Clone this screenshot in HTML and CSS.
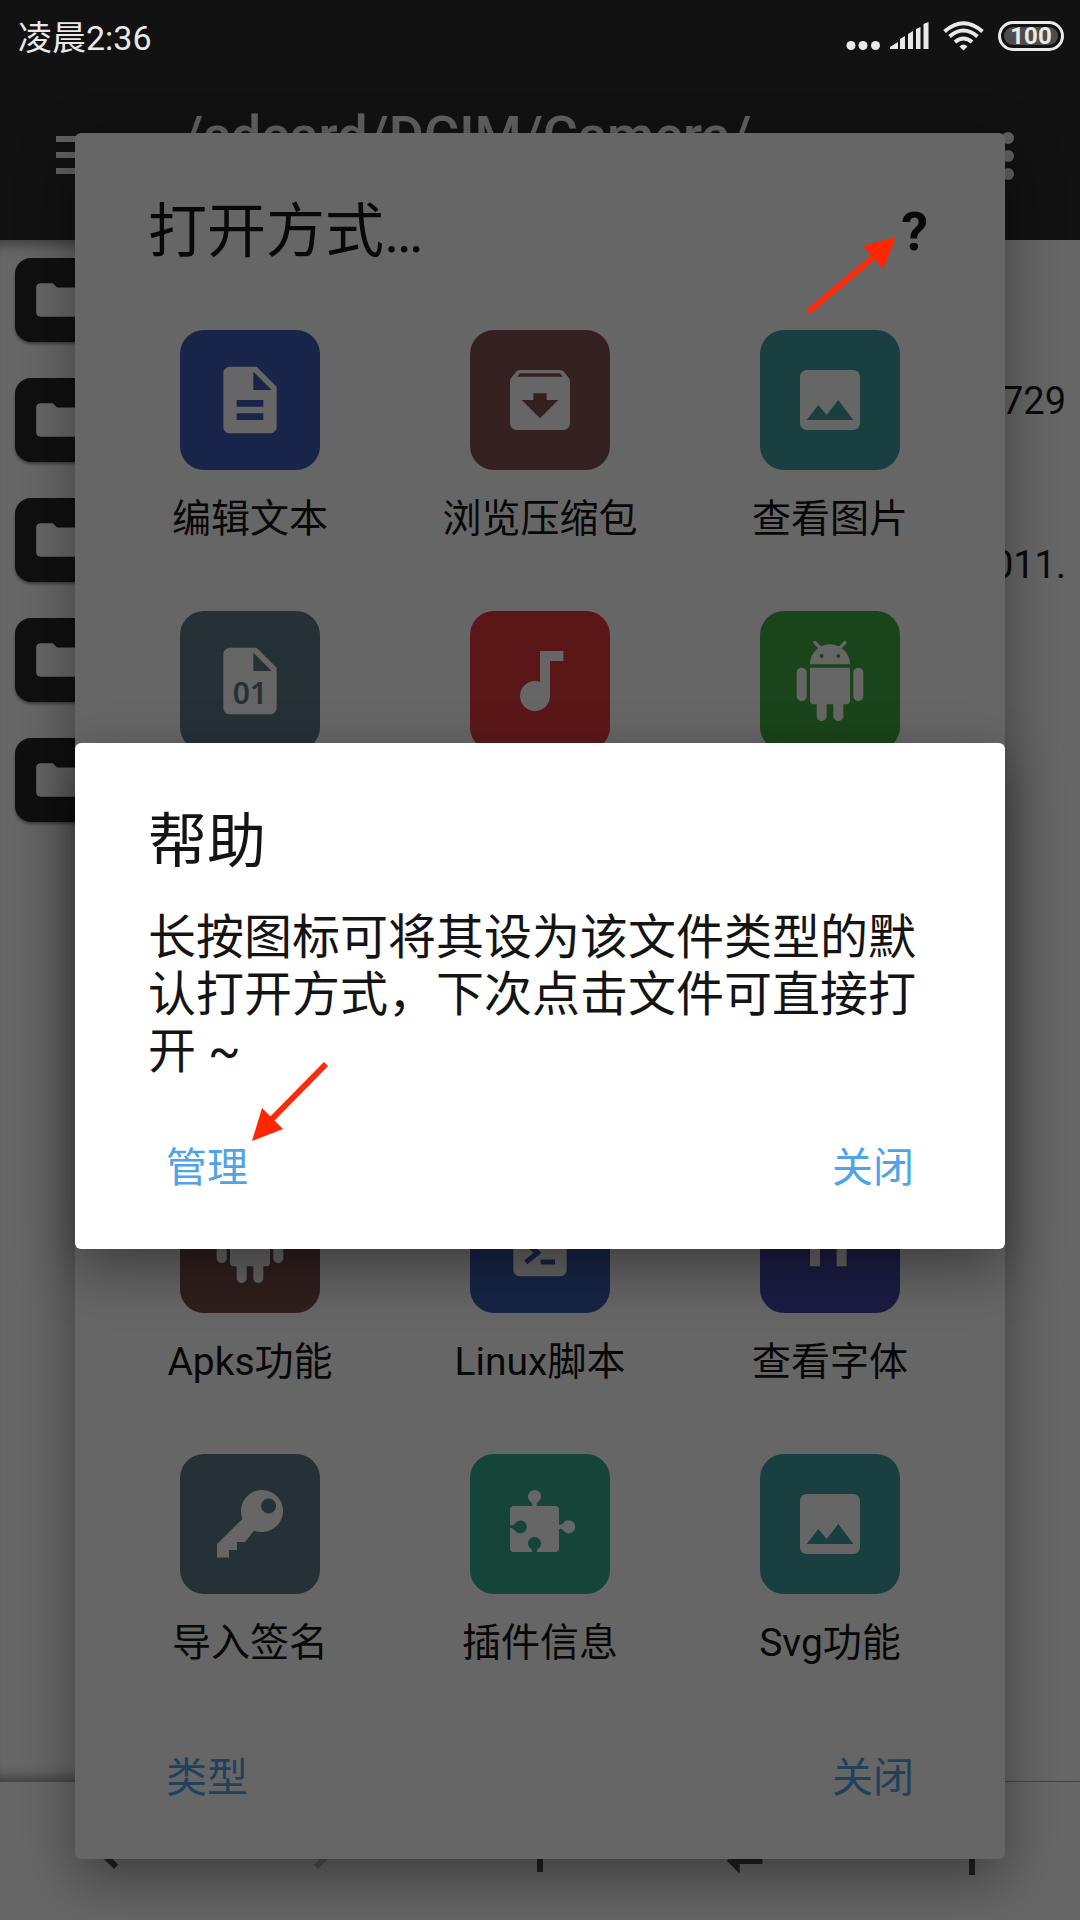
FILE: index.html
```html
<!DOCTYPE html>
<html lang="zh-CN">
<head>
<meta charset="utf-8">
<meta name="viewport" content="width=device-width, initial-scale=1">
<title>打开方式</title>
<link rel="stylesheet" href="styles.css">
</head>
<body>
<svg class="defs" aria-hidden="true">
  <symbol id="folder" viewBox="0 0 24 24"><path d="M10 4H4c-1.100 0-2 .9-2 2v12c0 1.100.9 2 2 2h16c1.100 0 2-.9 2-2V8c0-1.100-.9-2-2-2h-8l-2-2z"/></symbol>
  <symbol id="android" viewBox="0 0 24 24"><path d="M6 18c0 .55.45 1 1 1h1v3.500c0 .83.67 1.500 1.500 1.500s1.500-.67 1.500-1.500V19h2v3.500c0 .83.67 1.500 1.500 1.500s1.500-.67 1.500-1.500V19h1c.55 0 1-.45 1-1V8H6v10zM3.500 8C2.670 8 2 8.670 2 9.500v7c0 .83.67 1.500 1.500 1.500S5 17.330 5 16.500v-7C5 8.670 4.330 8 3.500 8zm17 0c-.83 0-1.500.67-1.500 1.500v7c0 .83.67 1.500 1.500 1.500s1.500-.67 1.500-1.500v-7c0-.83-.67-1.500-1.500-1.500zm-4.970-5.840l1.300-1.300c.2-.2.2-.51 0-.71-.2-.2-.51-.2-.71 0l-1.480 1.480C13.850 1.230 12.950 1 12 1c-.96 0-1.860.23-2.660.63L7.850.15c-.2-.2-.51-.2-.71 0-.2.2-.2.51 0 .71l1.310 1.310C6.970 3.260 6 5.010 6 7h12c0-1.990-.97-3.750-2.470-4.840zM10 5H9V4h1v1zm5 0h-1V4h1v1z"/></symbol>
  <symbol id="image" viewBox="0 0 24 24"><path fill-rule="evenodd" d="M5 3h14a2 2 0 0 1 2 2v14a2 2 0 0 1-2 2H5a2 2 0 0 1-2-2V5a2 2 0 0 1 2-2zM5 18h14l-4.500-6-3.500 4.510-2.500-3.010z"/></symbol>
</svg>
<div class="screen">
  <div class="status">
    <span class="clock">凌晨2:36</span>
    <div class="status-icons">
      <svg width="34" height="30" viewBox="0 0 34 30"><circle cx="5" cy="24.500" r="4.500"/><circle cx="17" cy="24.500" r="4.500"/><circle cx="29.500" cy="24.500" r="4.500"/></svg>
      <svg class="signal" width="39" height="30" viewBox="0 0 39 30"><path d="M0 28v-2l8-5v7zM10 28V18l5-3v13zM18 28V13l5-3v18zM26 28V8l4.500-2v22zM33.500 28V3l5-2v27z"/></svg>
      <svg class="wifi" width="41" height="30" viewBox="0 0 41 30"><g fill="none" stroke="#e9e9e9" stroke-width="4"><path d="M1.500 10.500Q20.500-6 39.500 10.500M6.500 15.500Q20.500 3.500 34.500 15.500M12 21Q20.500 14 29 21"/></g><path d="M20.500 29.500l-4-4q4-4 8 0z"/></svg>
      <span class="battery"><span class="charge">100</span></span>
    </div>
  </div>
  <header class="appbar">
    <button class="plain menu" aria-label="菜单"><svg width="54" height="38" viewBox="0 0 54 38"><path d="M0 0h54v6H0zM0 16h54v6H0zM0 32h54v6H0z"/></svg></button>
    <h1 class="path">/sdcard/DCIM/Camera/</h1>
    <button class="plain more" aria-label="更多"><svg width="12" height="48" viewBox="0 0 12 48"><circle cx="6" cy="6" r="6"/><circle cx="6" cy="24" r="6"/><circle cx="6" cy="42" r="6"/></svg></button>
  </header>
  <main class="panes">
    <div class="pane left">
      <span class="folder"><svg><use href="#folder"/></svg></span>
      <span class="folder"><svg><use href="#folder"/></svg></span>
      <span class="folder"><svg><use href="#folder"/></svg></span>
      <span class="folder"><svg><use href="#folder"/></svg></span>
      <span class="folder"><svg><use href="#folder"/></svg></span>
    </div>
    <div class="pane right">
      <span>729</span>
      <span>011.</span>
    </div>
  </main>
  <nav class="toolbar">
    <button class="plain" aria-label="后退"><svg viewBox="0 0 24 24"><path d="M15.410 7.410L14 6l-6 6 6 6 1.410-1.410L10.830 12z"/></svg></button>
    <button class="plain" aria-label="前进" disabled><svg viewBox="0 0 24 24"><path d="M10 6L8.590 7.410 13.170 12l-4.580 4.590L10 18l6-6z"/></svg></button>
    <button class="plain" aria-label="新建"><svg viewBox="0 0 24 24"><path d="M19 13h-6v6h-2v-6H5v-2h6V5h2v6h6v2z"/></svg></button>
    <button class="plain" aria-label="切换"><svg class="swap" viewBox="0 0 24 24"><path d="M6.990 11L3 15l3.990 4v-3H14v-2H6.990v-3zM21 9l-3.990-4v3H10v2h7.010v3L21 9z"/></svg></button>
    <button class="plain" aria-label="上级"><svg viewBox="0 0 24 24"><path d="M4 12l1.410 1.410L11 7.830V20h2V7.830l5.580 5.590L20 12l-8-8-8 8z"/></svg></button>
  </nav>

  <div class="layer">
    <section class="dialog">
      <div class="dialog-head">
        <h2>打开方式…</h2>
        <button class="plain help">?</button>
      </div>
      <div class="apps">
        <button class="plain app"><span class="tile navy"><svg viewBox="0 0 24 24"><path d="M14 2H6c-1.100 0-2 .9-2 2v16c0 1.100.9 2 2 2h12c1.100 0 2-.9 2-2V8l-6-6zm2 16H8v-2h8v2zm0-4H8v-2h8v2zm-3-5V3.500L18.500 9H13z"/></svg></span><span class="label">编辑文本</span></button>
        <button class="plain app"><span class="tile brown"><svg viewBox="0 0 24 24"><path d="M20.540 5.230l-1.390-1.680C18.880 3.210 18.470 3 18 3H6c-.47 0-.88.21-1.160.55L3.460 5.230C3.170 5.570 3 6.020 3 6.500V19c0 1.100.9 2 2 2h14c1.100 0 2-.9 2-2V6.500c0-.48-.17-.93-.46-1.270zM12 17.500L6.500 12H10v-2h4v2h3.500L12 17.500zM5.120 5l.81-1h12l.94 1H5.120z"/></svg></span><span class="label">浏览压缩包</span></button>
        <button class="plain app"><span class="tile teal"><svg><use href="#image"/></svg></span><span class="label">查看图片</span></button>
        <button class="plain app"><span class="tile slate"><svg viewBox="0 0 24 24"><path d="M14 2H6c-1.100 0-2 .9-2 2v16c0 1.100.9 2 2 2h12c1.100 0 2-.9 2-2V8l-6-6zm-1 7V3.500L18.500 9H13z"/><text class="bits" x="12" y="19" text-anchor="middle">01</text></svg></span></button>
        <button class="plain app" aria-label="音乐"><span class="tile red"><svg viewBox="0 0 24 24"><path d="M12 3v9.280c-.47-.17-.97-.28-1.500-.28C8.010 12 6 14.010 6 16.500S8.010 21 10.500 21c2.310 0 4.200-1.750 4.450-4H15V6h4V3h-7z"/></svg></span></button>
        <button class="plain app" aria-label="安装包"><span class="tile green"><svg><use href="#android"/></svg></span></button>
        <button class="plain app fourth"><span class="tile coffee"><svg><use href="#android"/></svg></span><span class="label">Apks功能</span></button>
        <button class="plain app fourth"><span class="tile blue"><svg viewBox="0 0 24 24"><path d="M14 2H6c-1.100 0-2 .9-2 2v16c0 1.100.9 2 2 2h12c1.100 0 2-.9 2-2V8z"/><path class="prompt" d="M7.700 12l3.600 2.900-3.600 2.900M12.200 17.700h4.300"/></svg></span><span class="label">Linux脚本</span></button>
        <button class="plain app fourth"><span class="tile indigo"><svg viewBox="0 0 24 24"><path d="M6 5h3v14H6zM14 5h3v14h-3z"/></svg></span><span class="label">查看字体</span></button>
        <button class="plain app fifth"><span class="tile slate"><svg viewBox="0 0 80 80"><path fill-rule="evenodd" d="M52 6a21 21 0 1 1-8 40.400L35 58H27V66H19V73.500H7V60L32.500 35A21 21 0 0 1 52 6zM58.500 14.500a7.500 7.500 0 1 0 .1 0z"/></svg></span><span class="label">导入签名</span></button>
        <button class="plain app fifth"><span class="tile jade"><svg viewBox="0 0 80 80"><path d="M14 22H32Q33 20 31 18A6.500 6.500 0 1 1 38 18Q36 20 37 22H55Q59 22 59 26V40.500Q61 41.500 63 39.500A6.500 6.500 0 1 1 63 46Q61 44 59 45V64Q59 68 55 68H37Q36.500 66 38 65A6.500 6.500 0 1 0 31 65Q32.500 66 32 68H14Q10 68 10 64V44Q12 43.500 14.500 46A6.500 6.500 0 1 0 14.500 40Q12 42 10 41V26Q10 22 14 22z"/></svg></span><span class="label">插件信息</span></button>
        <button class="plain app fifth"><span class="tile teal"><svg><use href="#image"/></svg></span><span class="label">Svg功能</span></button>
      </div>
      <div class="actions"><button class="plain">类型</button><button class="plain">关闭</button></div>
    </section>
  </div>

  <div class="layer scrim">
    <section class="dialog" role="dialog" aria-labelledby="help-title">
      <div class="dialog-head"><h2 id="help-title">帮助</h2></div>
      <p class="message">长按图标可将其设为该文件类型的默认打开方式，下次点击文件可直接打开 ~</p>
      <div class="actions"><button class="plain">管理</button><button class="plain">关闭</button></div>
      <svg class="arrow to-manage" width="80" height="84" viewBox="0 0 80 84"><path d="M75 4L18 62" stroke="#fb2c0c" stroke-width="6"/><path d="M1 81L11 48 32 69z"/></svg>
    </section>
    <svg class="arrow to-help" width="94" height="82" viewBox="0 0 94 82"><path d="M4 78L72 21" stroke="#fb2c0c" stroke-width="6"/><path d="M92 3L59 12 79 35z"/></svg>
  </div>
</div>
</body>
</html>
```
FILE: styles.css
```css
* { box-sizing: border-box; }

body {
  margin: 0;
  font-family: Roboto, "Noto Sans CJK SC", sans-serif;
}

.defs { display: none; }

.plain {
  padding: 0;
  border: 0;
  background: none;
  color: inherit;
  font: inherit;
}

.screen {
  position: relative;
  display: flex;
  flex-direction: column;
  min-height: 100vh;
  overflow: hidden;
  background: #fff;
}

/* Status bar stays bright above the dimmed page */
.status {
  display: flex;
  align-items: center;
  justify-content: space-between;
  height: 72px;
  padding: 0 16px 0 18px;
  background: #121212;
  color: #e9e9e9;
  position: relative;
  z-index: 3;
}

.clock {
  padding-top: 4px;
  font-size: 34px;
  line-height: 40px;
}

.status-icons {
  display: flex;
  align-items: center;
  gap: 14px;
  fill: #e9e9e9;
}

.signal { margin-left: -4px; }

.battery {
  width: 66px;
  height: 30px;
  padding: 3px;
  border: 3px solid #e9e9e9;
  border-radius: 15px;
}

.charge {
  display: block;
  border-radius: 9px;
  background: #4c4c4c;
  font-size: 24px;
  font-weight: 700;
  line-height: 18px;
  text-align: center;
}

.appbar {
  display: flex;
  align-items: flex-start;
  height: 168px;
  padding: 34px 66px 0 56px;
  background: #2d2d2d;
  color: #f0f0f0;
  fill: #f0f0f0;
}

.menu { margin-top: 30px; }
.menu svg, .more svg { display: block; }
.more { margin-top: 26px; }

.path {
  flex: 1;
  margin: 0 0 0 72px;
  font-size: 54px;
  font-weight: 500;
  line-height: 60px;
}

.panes {
  display: grid;
  grid-template-columns: 1fr 1fr;
  flex: 1;
}

.pane {
  display: flex;
  flex-direction: column;
}

.left {
  gap: 36px;
  padding: 18px 15px;
  box-shadow: inset 0 16px 14px -12px #00000070, inset 0 -16px 14px -12px #00000070;
}

.folder {
  display: grid;
  place-items: center;
  width: 84px;
  height: 84px;
  border-radius: 16px;
  background: #282828;
  box-shadow: 0 2px 3px #00000066;
}

.folder svg {
  width: 50px;
  height: 50px;
  fill: #fff;
}

.right {
  align-items: flex-end;
  gap: 120px;
  padding: 139px 14px 0;
  border-bottom: 1px solid #aaa;
  color: #1c1c1c;
  font-size: 38px;
  line-height: 44px;
}

.toolbar {
  display: grid;
  grid-template-columns: repeat(5, 1fr);
  height: 138px;
  fill: #505050;
}

.toolbar button {
  display: grid;
  place-items: center;
}

.toolbar button:disabled { fill: #c4c4c4; }
.toolbar svg { width: 72px; height: 72px; }
.toolbar .swap { width: 78px; height: 78px; }

.layer {
  position: absolute;
  inset: 0;
  display: flex;
  flex-direction: column;
  justify-content: center;
  padding: 72px 75px 0;
}

.scrim { background: #00000099; }

.dialog {
  position: relative;
  padding: 62px 30px 51px;
  border-radius: 6px;
  background: #fff;
  box-shadow: 0 20px 56px #00000066;
  color: #141414;
}

.dialog-head {
  display: flex;
  align-items: center;
  justify-content: space-between;
  padding: 0 47px 0 43px;
}

h2 {
  margin: 0;
  font-size: 59px;
  font-weight: 400;
  line-height: 74px;
}

.help {
  font-size: 54px;
  font-weight: 700;
  line-height: 60px;
}

.apps {
  display: grid;
  grid-template-columns: repeat(3, 1fr);
  grid-template-rows: repeat(5, 281px);
  margin-top: 61px;
}

.app {
  display: flex;
  flex-direction: column;
  align-items: center;
  gap: 24px;
}

.fourth { grid-row: 4; }
.fifth { grid-row: 5; }

.tile {
  display: grid;
  place-items: center;
  width: 140px;
  height: 140px;
  border-radius: 24px;
  background: var(--tile);
}

.tile svg {
  width: 80px;
  height: 80px;
  fill: #fff;
}

.navy { --tile: #3e5bb8; }
.brown { --tile: #83544f; }
.teal { --tile: #3f9fa1; }
.slate { --tile: #5f7a88; }
.red { --tile: #e33a3c; }
.green { --tile: #43ac41; }
.coffee { --tile: #764f48; }
.blue { --tile: #3a5cae; }
.indigo { --tile: #4646aa; }
.jade { --tile: #36ab8f; }

.tile .bits {
  fill: var(--tile);
  font-family: "Noto Sans", sans-serif;
  font-size: 9px;
  font-weight: 600;
}

.tile .prompt {
  fill: none;
  stroke: var(--tile);
  stroke-width: 1.5;
}

.label {
  font-size: 39px;
  line-height: 50px;
  white-space: nowrap;
}

.actions {
  display: flex;
  justify-content: space-between;
  margin-top: 13px;
  padding: 0 61px;
  color: #4fa3e6;
  font-size: 41px;
  line-height: 60px;
}

.message {
  margin: 30px 43px 58px;
  font-size: 48px;
  line-height: 57px;
}

.message + .actions { margin-top: 0; }

.arrow {
  position: absolute;
  fill: #ff2600;
}

.to-manage { top: 317px; left: 176px; }
.to-help { top: 234px; right: 182px; }
```
